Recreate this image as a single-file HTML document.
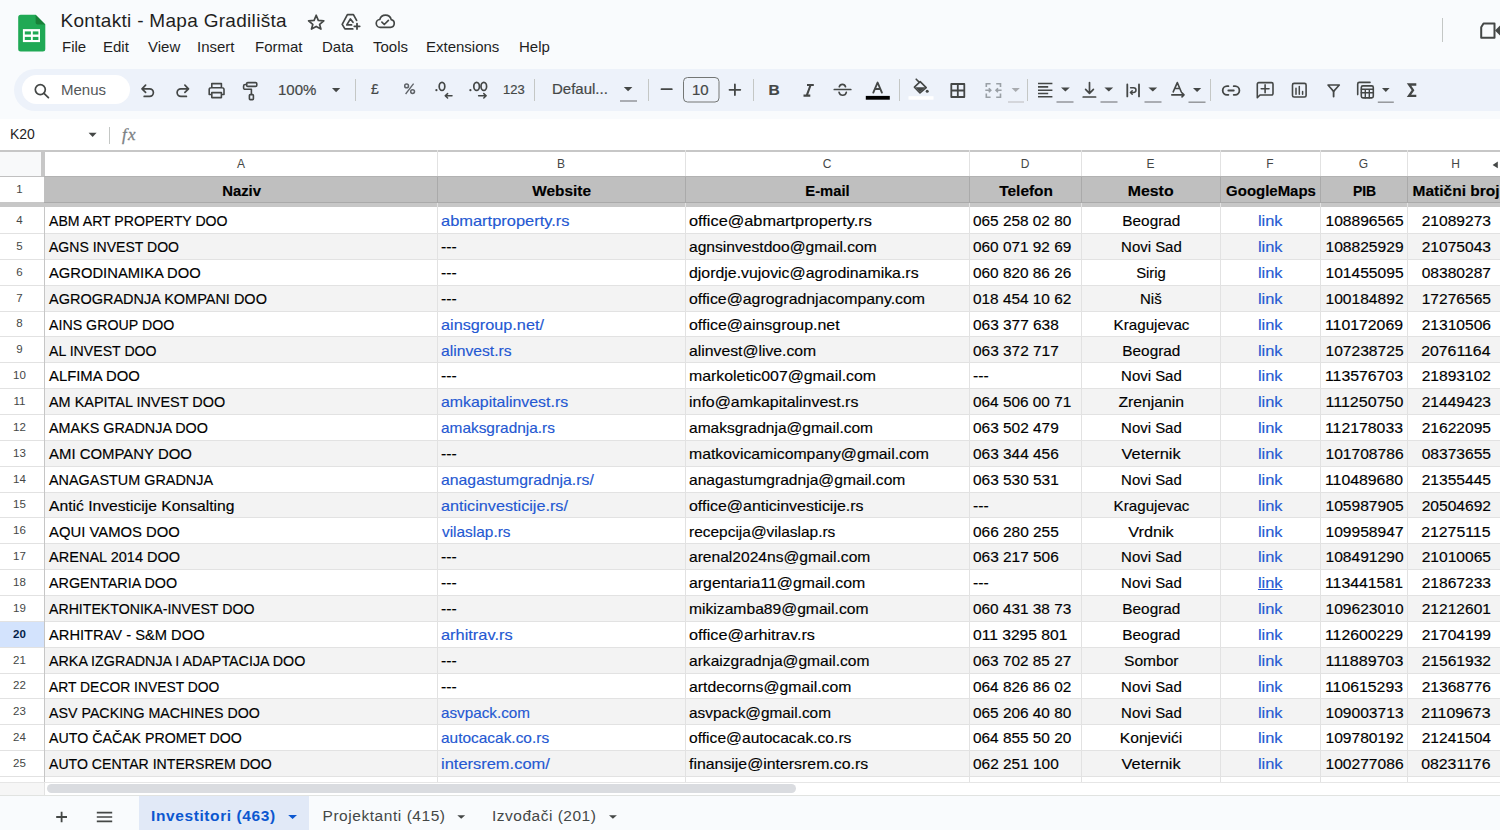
<!DOCTYPE html>
<html><head><meta charset="utf-8">
<style>
html,body{margin:0;padding:0}
body{width:1500px;height:830px;overflow:hidden;position:relative;background:#f9fbfd;font-family:"Liberation Sans",sans-serif;color:#1f1f1f}
.a{position:absolute;white-space:pre}
#title{left:60.5px;top:9.5px;font-size:19px;letter-spacing:0.3px;color:#1f1f1f}
.mi{position:absolute;top:38px;font-size:15px;color:#1f1f1f;white-space:pre}
#tb{position:absolute;left:14px;top:69px;width:1520px;height:42px;border-radius:21px;background:#edf2fa}
#search{position:absolute;left:22px;top:75px;width:108px;height:29px;border-radius:15px;background:#fff}
.tt{position:absolute;font-size:15px;color:#444746;white-space:pre;-webkit-text-stroke:0.2px #444746}
#fbar{position:absolute;left:0;top:119px;width:1500px;height:31px;background:#fff}
#grid{position:absolute;left:0;top:150px;width:1500px;height:645px;background:#fff;overflow:hidden}
.g{position:absolute}
.rbg{position:absolute;left:45px;width:1460px;background:#f3f3f3}
.hl{position:absolute;left:0;width:1500px;height:1px;background:#e2e2e2}
.vl{position:absolute;top:0;width:1px;height:632px;background:#e2e2e2}
.rn{position:absolute;left:0;width:39px;text-align:center;font-size:11.5px;color:#444746;line-height:14px}
.rn.sel{font-weight:bold;color:#041e49}
.rhsel{position:absolute;left:0;width:44px;background:#d3e3fd}
.t{position:absolute;white-space:pre;font-size:15px;line-height:17px;color:#000;transform-origin:0 0;-webkit-text-stroke:0.15px currentColor}
.lk{color:#2458d2}
.ul{text-decoration:underline}
.hb{font-weight:bold}
.cl{position:absolute;top:7px;font-size:12px;color:#444746;text-align:center;line-height:14px}
#tabs{position:absolute;left:0;top:795px;width:1500px;height:35px;background:#f9fbfd}
</style></head><body>
<!-- header -->
<svg class="a" style="left:0;top:0" width="1500" height="120" viewBox="0 0 1500 120">
  <!-- logo -->
  <path d="M20.7 14.7H35.6L45.3 24.4V49a2.5 2.5 0 0 1-2.5 2.5H20.7A2.5 2.5 0 0 1 18.2 49V17.2A2.5 2.5 0 0 1 20.7 14.7Z" fill="#20a955"/>
  <path d="M35.6 14.7L45.3 24.4H37.6A2 2 0 0 1 35.6 22.4Z" fill="#188038"/>
  <rect x="22.9" y="29.1" width="17.1" height="13" fill="#fff"/>
  <rect x="24.8" y="31.4" width="6.1" height="3.1" fill="#20a955"/>
  <rect x="32.8" y="31.4" width="5.6" height="3.1" fill="#20a955"/>
  <rect x="24.8" y="36.9" width="6.1" height="3.1" fill="#20a955"/>
  <rect x="32.8" y="36.9" width="5.6" height="3.1" fill="#20a955"/>
  <g fill="none" stroke="#444746" stroke-width="1.7" stroke-linejoin="round" stroke-linecap="round">
    <!-- star -->
    <path d="M316.2 15.2L318.3 20.4L323.8 20.8L319.6 24.4L320.9 29.1L316.2 26.4L311.5 29.1L312.8 24.4L308.6 20.8L314.1 20.4Z"/>
    <!-- drive add -->
    <path d="M356.6 20.4L353.4 14.6H347.4L342.2 24.4L344.9 28.9H352.8"/>
    <path d="M353 22.3L350.4 18.9L346.8 24.9H351.6"/>
    <path d="M357 23.6V29M354.3 26.3H359.7" stroke-width="1.8"/>
    <!-- cloud check -->
    <path d="M380.5 27.3H390.5A3.9 3.9 0 0 0 391.2 19.6A5.9 5.9 0 0 0 379.8 19.5A3.9 3.9 0 0 0 380.5 27.3Z"/>
    <path d="M381.9 22.2L384.3 24.5L388.4 20.4"/>
    <!-- meet -->
    <path d="M1483.5 23.4H1494.5V37.8H1481.2V27.2Z" stroke-width="2"/>
  </g>
  <path d="M1500 25.5L1495 30.5L1500 35.5Z" fill="#444746"/>
  <rect x="1442" y="18" width="1" height="24" fill="#c4c7c5"/>
</svg>
<div class="a" id="title">Kontakti - Mapa Gradilišta</div>
<div class="mi" style="left:62px">File</div>
<div class="mi" style="left:103px">Edit</div>
<div class="mi" style="left:148px">View</div>
<div class="mi" style="left:197px">Insert</div>
<div class="mi" style="left:255px">Format</div>
<div class="mi" style="left:322px">Data</div>
<div class="mi" style="left:373px">Tools</div>
<div class="mi" style="left:426px">Extensions</div>
<div class="mi" style="left:519px">Help</div>

<!-- toolbar -->
<div id="tb"></div>
<div id="search"></div>
<div class="tt" style="left:61px;top:81px;color:#545759;-webkit-text-stroke:0">Menus</div>
<div class="tt" style="left:278px;top:81px">100%</div>
<div class="tt" style="left:371px;top:81px;font-size:14px">£</div>
<div class="tt" style="left:503px;top:82px;font-size:13px">123</div>
<div class="tt" style="left:552px;top:80px">Defaul...</div>
<div class="tt" style="left:692px;top:81px;font-size:15px">10</div>
<svg class="a" style="left:0;top:60px" width="1500" height="60" viewBox="0 60 1500 60">
  <g fill="none" stroke="#444746" stroke-width="1.7" stroke-linecap="round" stroke-linejoin="round">
    <!-- search -->
    <circle cx="40.3" cy="89.6" r="5" stroke-width="1.7"/>
    <path d="M44 93.4L48.4 97.6" stroke-width="1.8"/>
    <!-- undo -->
    <path d="M142.5 88.8H149.6A3.8 3.8 0 0 1 149.6 96.4H144.2M145.6 85.2L142 88.8L145.6 92.4"/>
    <!-- redo -->
    <path d="M188 88.8H180.9A3.8 3.8 0 0 0 180.9 96.4H186.4M184.9 85.2L188.5 88.8L184.9 92.4"/>
    <!-- print -->
    <path d="M211.8 87.5V83.6H221.4V87.5M211.8 94.5H209.2V89.5A1.8 1.8 0 0 1 211 87.7H222.2A1.8 1.8 0 0 1 224 89.5V94.5H221.4M211.8 92.6H221.4V97.6H211.8Z" stroke-width="1.6"/>
    <!-- paint roller -->
    <rect x="246.6" y="82.6" width="10.2" height="3.8" rx="1.2" stroke-width="1.6"/>
    <path d="M246.6 84.5H245.2A1.6 1.6 0 0 0 243.6 86.1V87.9A1.4 1.4 0 0 0 245 89.3H251.4V94.3" stroke-width="1.6"/>
    <rect x="249.4" y="94.6" width="4" height="5" rx="0.8" stroke-width="1.6"/>
    <!-- decimals arrows -->
    <path d="M452 95.8H445.2M447.6 93.6L445.2 95.8L447.6 98" stroke-width="1.5"/>
    <path d="M478.6 95.8H486.2M483.8 93.6L486.2 95.8L483.8 98" stroke-width="1.5"/>
    <!-- minus plus -->
    <path d="M661.5 89.2H671.8M729.5 89.8H740.3M734.9 84.5V95.1" stroke-width="1.8"/>
    <!-- italic -->
    <path d="M803.5 95.6H810.3M807 85H813.8M810.6 85L806.7 95.6" stroke-width="2.1" stroke-linecap="butt"/>
    <!-- strikethrough -->
    <path d="M834.3 89.5H850.8M839.3 86.7A3.2 3.2 0 0 1 845.5 86.7M839.1 92.4A3.7 3.7 0 0 0 846.3 92.4" stroke-width="1.7"/>
    <!-- text color A -->
    <path d="M873.3 92.6L877.6 82.5L881.9 92.6M874.9 89H880.3" stroke-width="1.9"/>
    <!-- fill bucket -->
    <path d="M916.2 79.2L919.4 82.4M920.2 81.6L926.2 87.6L920 93L914.4 87.2Z" stroke-width="1.6"/>
    <!-- borders -->
    <path d="M951.3 84H964.3V97H951.3ZM957.8 84V97M951.3 90.5H964.3" stroke-width="1.8" stroke-linecap="butt"/>
    <!-- align left -->
    <path d="M1038 83.5H1052.4M1038 86.9H1048.2M1038 90.2H1052.4M1038 93.5H1048.2M1038 96.8H1052.4" stroke-width="1.6" stroke-linecap="butt"/>
    <!-- valign -->
    <path d="M1089.5 82.6V93M1085.6 89.4L1089.5 93.3L1093.4 89.4M1083.2 97H1095.6" stroke-width="1.7"/>
    <!-- wrap -->
    <path d="M1127.3 84.4V96.4M1139 84.4V96.4" stroke-width="1.8"/>
    <path d="M1130.6 87.7H1133.6A2.4 2.4 0 0 1 1133.6 92.5H1130.4M1132.2 90.7L1130.4 92.5L1132.2 94.3" stroke-width="1.5"/>
    <!-- rotate -->
    <path d="M1173.2 91.8L1177.3 82.6L1181.2 91.8M1174.6 88.5H1179.8M1171.8 94.9H1184M1182 92.9L1184 94.9L1182 96.9" stroke-width="1.6"/>
    <!-- link -->
    <path d="M1228.4 86.2H1227A4.3 4.3 0 0 0 1227 94.8H1228.4M1233.7 86.2H1235.1A4.3 4.3 0 0 1 1235.1 94.8H1233.7M1228.3 90.5H1233.8" stroke-width="1.8"/>
    <!-- comment -->
    <path d="M1257.3 97.7V84A1.4 1.4 0 0 1 1258.7 82.6H1271.6A1.4 1.4 0 0 1 1273 84V93.6A1.4 1.4 0 0 1 1271.6 95H1260Z" stroke-width="1.6"/>
    <path d="M1261.2 88.8H1269M1265.1 84.9V92.7" stroke-width="1.6"/>
    <!-- chart -->
    <rect x="1292.5" y="83.4" width="13.6" height="13.6" rx="1.6" stroke-width="1.6"/>
    <path d="M1296 88.2V94.2M1299.3 86.4V94.2M1302.6 91.5V94.2" stroke-width="1.5"/>
    <!-- filter -->
    <path d="M1328 85H1339.3L1333.6 91.4Z" stroke-width="1.6"/>
    <path d="M1333.6 91V96.6" stroke-width="1.8"/>
    <!-- calc -->
    <path d="M1357.7 94.6V84A1.6 1.6 0 0 1 1359.3 82.4H1370" stroke-width="1.6"/>
    <rect x="1361.3" y="85.9" width="12" height="12" rx="1.6" stroke-width="1.6"/>
    <path d="M1361.3 89.2H1373.3M1361.3 92.7H1373.3M1365.3 89.2V97.9M1369.3 89.2V97.9" stroke-width="1.4"/>
    <!-- sigma -->
    <path d="M1416.3 84.5H1409L1413 90.2L1409 95.9H1416.3" stroke-width="2.3" stroke-linecap="butt" stroke-linejoin="miter"/>
  </g>
  <!-- merge disabled -->
  <g fill="none" stroke="#9aa0a6" stroke-width="1.6">
    <path d="M990.6 83.7H986.3V87M986.3 93.4V97.2H990.6M996.2 83.7H1000.5V87M1000.5 93.4V97.2H996.2M985.3 90.2H990.8M988.8 88.2L990.8 90.2L988.8 92.2M1001.6 90.2H996M998 88.2L996 90.2L998 92.2"/>
  </g>
  <!-- fill bucket interior and drop -->
  <path d="M915.4 87.3H925.5L920 92.2Z" fill="#444746"/>
  <circle cx="927.2" cy="91.2" r="1.5" fill="#444746"/>
  <rect x="865.8" y="95.9" width="24" height="3.8" fill="#000"/>
  <rect x="908.5" y="96.2" width="25" height="3.5" fill="#fff"/>
  <!-- percent -->
  <g fill="none" stroke="#5f6368" stroke-width="1.5">
    <circle cx="406.6" cy="85.9" r="1.9"/>
    <circle cx="412.6" cy="91.6" r="1.9"/>
    <path d="M413.6 83.6L405.6 94" stroke-width="1.3"/>
  </g>
  <!-- decimals text -->
  <g fill="#444746">
    <circle cx="436.4" cy="90.2" r="1.1"/>
    <ellipse cx="442" cy="86.4" rx="2.8" ry="4" fill="none" stroke="#444746" stroke-width="1.7"/>
    <circle cx="470.4" cy="90.2" r="1.1"/>
    <ellipse cx="476.6" cy="86.4" rx="2.8" ry="4" fill="none" stroke="#444746" stroke-width="1.7"/>
    <ellipse cx="483.8" cy="86.4" rx="2.8" ry="4" fill="none" stroke="#444746" stroke-width="1.7"/>
  </g>
  <!-- separators -->
  <g fill="#c4c7c5">
    <rect x="355" y="79" width="1" height="22"/>
    <rect x="534" y="79" width="1" height="22"/>
    <rect x="648" y="79" width="1" height="22"/>
    <rect x="753" y="79" width="1" height="22"/>
    <rect x="899" y="79" width="1" height="22"/>
    <rect x="1027" y="79" width="1" height="22"/>
    <rect x="1210" y="79" width="1" height="22"/>
  </g>
  <!-- dropdown triangles -->
  <g fill="#444746">
    <path d="M332 88H340.2L336.1 92.2Z"/>
    <path d="M623.8 87H632.4L628.1 91.3Z"/>
    <path d="M1061 87.6H1069.8L1065.4 91.6Z"/>
    <path d="M1104.4 87.6H1113.2L1108.8 91.6Z"/>
    <path d="M1148.4 87.6H1157.2L1152.8 91.6Z"/>
    <path d="M1193 88H1201.2L1197.1 92Z"/>
    <path d="M1382 88H1389.6L1385.8 92Z"/>
  </g>
  <path d="M1011.6 88H1019.8L1015.7 92Z" fill="#a8abaf"/>
  <!-- underlines -->
  <g fill="#8e9194">
    <rect x="620" y="100.3" width="17" height="1.4"/>
    <rect x="1056.5" y="101.3" width="17" height="1.4"/>
    <rect x="1100.5" y="101.3" width="17" height="1.4"/>
    <rect x="1144.5" y="101.3" width="17" height="1.4"/>
    <rect x="1188.5" y="101.5" width="17" height="1.4"/>
    <rect x="1377.8" y="101.5" width="16" height="1.4"/>
  </g>
  <rect x="1008" y="101.3" width="16" height="1.4" fill="#c9cbce"/>
  <!-- font size box -->
  <rect x="683.5" y="77.5" width="35.5" height="24.5" rx="4" fill="none" stroke="#747775" stroke-width="1"/>
</svg>

<div class="tt" style="left:768.5px;top:81px;font-size:15.5px;font-weight:bold">B</div>
<div class="tt" style="left:1406.5px;top:80px;font-size:17px;font-weight:bold;display:none">Σ</div>

<!-- formula bar -->
<div id="fbar"></div>
<div class="a" style="left:10px;top:126px;font-size:14px;color:#1f1f1f">K20</div>
<svg class="a" style="left:0;top:119px" width="160" height="31" viewBox="0 119 160 31">
  <path d="M88.6 132.8H96.6L92.6 137Z" fill="#444746"/>
  <rect x="109" y="127" width="1" height="17" fill="#c4c7c5"/>
</svg>
<div class="a" style="left:122px;top:124.5px;font-family:'Liberation Serif',serif;font-style:italic;font-size:17px;letter-spacing:1.2px;color:#7b7f83;-webkit-text-stroke:0.3px #7b7f83">fx</div>

<!-- grid -->
<div id="grid">
  <div class="g" style="left:0;top:0;width:1500px;height:2px;background:#c7c7c7"></div>
  <div class="g" style="left:0;top:2px;width:41px;height:24px;background:#f8f9fa"></div>
  <div class="g" style="left:41px;top:2px;width:4px;height:24px;background:#c7c7c7"></div>
  <div class="g" style="left:0;top:26px;width:1500px;height:1px;background:#c0c0c0"></div>
  <div class="g" style="left:44px;top:27px;width:1460px;height:25px;background:#bfbfbf"></div>
  <div class="g" style="left:0;top:52px;width:1500px;height:5px;background:#c7c7c7"></div>
  <div class="g" style="left:44px;top:27px;width:1px;height:25px;background:#c0c0c0"></div>
  <div class="g" style="left:44px;top:57px;width:1px;height:575px;background:#cdcdcd"></div>
  <div class="rn" style="top:31.7px">1</div>
  <div class="cl" style="left:45px;width:392px">A</div>
  <div class="cl" style="left:437px;width:248px">B</div>
  <div class="cl" style="left:685px;width:284px">C</div>
  <div class="cl" style="left:969px;width:112px">D</div>
  <div class="cl" style="left:1081px;width:139px">E</div>
  <div class="cl" style="left:1220px;width:100px">F</div>
  <div class="cl" style="left:1320px;width:87px">G</div>
  <div class="cl" style="left:1407px;width:97px">H</div>
  <svg class="g" style="left:1490px;top:10px" width="10" height="10" viewBox="0 0 10 10"><path d="M7.8 1.6V8.2L2.6 4.9Z" fill="#444746"/></svg>
</div>
<div id="cells" style="position:absolute;left:0;top:0;width:1500px;height:782px;overflow:hidden">
<div class="hl" style="top:233px"></div>
<div class="rbg" style="top:234px;height:25px"></div>
<div class="hl" style="top:259px"></div>
<div class="hl" style="top:285px"></div>
<div class="rbg" style="top:286px;height:25px"></div>
<div class="hl" style="top:311px"></div>
<div class="hl" style="top:336px"></div>
<div class="rbg" style="top:337px;height:25px"></div>
<div class="hl" style="top:362px"></div>
<div class="hl" style="top:388px"></div>
<div class="rbg" style="top:389px;height:25px"></div>
<div class="hl" style="top:414px"></div>
<div class="hl" style="top:440px"></div>
<div class="rbg" style="top:441px;height:25px"></div>
<div class="hl" style="top:466px"></div>
<div class="hl" style="top:492px"></div>
<div class="rbg" style="top:493px;height:24px"></div>
<div class="hl" style="top:517px"></div>
<div class="hl" style="top:543px"></div>
<div class="rbg" style="top:544px;height:25px"></div>
<div class="hl" style="top:569px"></div>
<div class="hl" style="top:595px"></div>
<div class="rbg" style="top:596px;height:25px"></div>
<div class="hl" style="top:621px"></div>
<div class="hl" style="top:647px"></div>
<div class="rbg" style="top:648px;height:25px"></div>
<div class="hl" style="top:673px"></div>
<div class="hl" style="top:698px"></div>
<div class="rbg" style="top:699px;height:25px"></div>
<div class="hl" style="top:724px"></div>
<div class="hl" style="top:750px"></div>
<div class="rbg" style="top:751px;height:25px"></div>
<div class="hl" style="top:776px"></div>
<div class="g" style="position:absolute;left:44px;top:207px;width:1px;height:575px;background:#c6c6c6"></div>
<div class="vl" style="left:437px;top:150px"></div>
<div class="vl" style="left:685px;top:150px"></div>
<div class="vl" style="left:969px;top:150px"></div>
<div class="vl" style="left:1081px;top:150px"></div>
<div class="vl" style="left:1220px;top:150px"></div>
<div class="vl" style="left:1320px;top:150px"></div>
<div class="vl" style="left:1407px;top:150px"></div>
<div class="rn" style="top:213.2px">4</div>
<div class="rn" style="top:239.2px">5</div>
<div class="rn" style="top:265.2px">6</div>
<div class="rn" style="top:291.2px">7</div>
<div class="rn" style="top:316.2px">8</div>
<div class="rn" style="top:342.2px">9</div>
<div class="rn" style="top:368.2px">10</div>
<div class="rn" style="top:394.2px">11</div>
<div class="rn" style="top:420.2px">12</div>
<div class="rn" style="top:446.2px">13</div>
<div class="rn" style="top:472.2px">14</div>
<div class="rn" style="top:497.2px">15</div>
<div class="rn" style="top:523.2px">16</div>
<div class="rn" style="top:549.2px">17</div>
<div class="rn" style="top:575.2px">18</div>
<div class="rn" style="top:601.2px">19</div>
<div class="rhsel" style="top:622px;height:25px"></div>
<div class="rn sel" style="top:627.2px">20</div>
<div class="rn" style="top:653.2px">21</div>
<div class="rn" style="top:678.2px">22</div>
<div class="rn" style="top:704.2px">23</div>
<div class="rn" style="top:730.2px">24</div>
<div class="rn" style="top:756.2px">25</div>
<div class="t" style="left:48.6px;top:212.3px;transform:scaleX(0.941)">ABM ART PROPERTY DOO</div>
<div class="t lk" style="left:440.9px;top:212.3px;transform:scaleX(1.096)">abmartproperty.rs</div>
<div class="t" style="left:688.9px;top:212.3px;transform:scaleX(1.088)">office@abmartproperty.rs</div>
<div class="t" style="left:973.0px;top:212.3px;transform:scaleX(1.024)">065 258 02 80</div>
<div class="t" style="left:1122.7px;top:212.3px;transform:scaleX(1.023);transform-origin:50% 0">Beograd</div>
<div class="t lk" style="left:1259.3px;top:212.3px;transform:scaleX(1.093);transform-origin:50% 0">link</div>
<div class="t" style="left:1326.6px;top:212.3px;transform:scaleX(1.039);transform-origin:50% 0">108896565</div>
<div class="t" style="left:1422.7px;top:212.3px;transform:scaleX(1.039);transform-origin:50% 0">21089273</div>
<div class="t" style="left:48.6px;top:238.2px;transform:scaleX(0.936)">AGNS INVEST DOO</div>
<div class="t" style="left:440.9px;top:238.2px;transform:scaleX(1.047)">---</div>
<div class="t" style="left:688.9px;top:238.2px;transform:scaleX(1.041)">agnsinvestdoo@gmail.com</div>
<div class="t" style="left:973.0px;top:238.2px;transform:scaleX(1.024)">060 071 92 69</div>
<div class="t" style="left:1120.7px;top:238.2px;transform:scaleX(0.996);transform-origin:50% 0">Novi Sad</div>
<div class="t lk" style="left:1259.3px;top:238.2px;transform:scaleX(1.093);transform-origin:50% 0">link</div>
<div class="t" style="left:1326.6px;top:238.2px;transform:scaleX(1.039);transform-origin:50% 0">108825929</div>
<div class="t" style="left:1422.7px;top:238.2px;transform:scaleX(1.039);transform-origin:50% 0">21075043</div>
<div class="t" style="left:48.6px;top:264.0px;transform:scaleX(0.984)">AGRODINAMIKA DOO</div>
<div class="t" style="left:440.9px;top:264.0px;transform:scaleX(1.047)">---</div>
<div class="t" style="left:688.9px;top:264.0px;transform:scaleX(1.058)">djordje.vujovic@agrodinamika.rs</div>
<div class="t" style="left:973.0px;top:264.0px;transform:scaleX(1.024)">060 820 86 26</div>
<div class="t" style="left:1136.1px;top:264.0px;transform:scaleX(0.990);transform-origin:50% 0">Sirig</div>
<div class="t lk" style="left:1259.3px;top:264.0px;transform:scaleX(1.093);transform-origin:50% 0">link</div>
<div class="t" style="left:1326.6px;top:264.0px;transform:scaleX(1.039);transform-origin:50% 0">101455095</div>
<div class="t" style="left:1422.7px;top:264.0px;transform:scaleX(1.039);transform-origin:50% 0">08380287</div>
<div class="t" style="left:48.6px;top:289.9px;transform:scaleX(0.966)">AGROGRADNJA KOMPANI DOO</div>
<div class="t" style="left:440.9px;top:289.9px;transform:scaleX(1.047)">---</div>
<div class="t" style="left:688.9px;top:289.9px;transform:scaleX(1.058)">office@agrogradnjacompany.com</div>
<div class="t" style="left:973.0px;top:289.9px;transform:scaleX(1.024)">018 454 10 62</div>
<div class="t" style="left:1140.3px;top:289.9px;transform:scaleX(0.999);transform-origin:50% 0">Niš</div>
<div class="t lk" style="left:1259.3px;top:289.9px;transform:scaleX(1.093);transform-origin:50% 0">link</div>
<div class="t" style="left:1326.6px;top:289.9px;transform:scaleX(1.039);transform-origin:50% 0">100184892</div>
<div class="t" style="left:1422.7px;top:289.9px;transform:scaleX(1.039);transform-origin:50% 0">17276565</div>
<div class="t" style="left:48.6px;top:315.7px;transform:scaleX(0.947)">AINS GROUP DOO</div>
<div class="t lk" style="left:440.9px;top:315.7px;transform:scaleX(1.083)">ainsgroup.net/</div>
<div class="t" style="left:688.9px;top:315.7px;transform:scaleX(1.063)">office@ainsgroup.net</div>
<div class="t" style="left:973.0px;top:315.7px;transform:scaleX(1.028)">063 377 638</div>
<div class="t" style="left:1113.6px;top:315.7px;transform:scaleX(1.010);transform-origin:50% 0">Kragujevac</div>
<div class="t lk" style="left:1259.3px;top:315.7px;transform:scaleX(1.093);transform-origin:50% 0">link</div>
<div class="t" style="left:1327.1px;top:315.7px;transform:scaleX(1.055);transform-origin:50% 0">110172069</div>
<div class="t" style="left:1422.7px;top:315.7px;transform:scaleX(1.039);transform-origin:50% 0">21310506</div>
<div class="t" style="left:48.6px;top:341.6px;transform:scaleX(0.942)">AL INVEST DOO</div>
<div class="t lk" style="left:440.9px;top:341.6px;transform:scaleX(1.046)">alinvest.rs</div>
<div class="t" style="left:688.9px;top:341.6px;transform:scaleX(1.050)">alinvest@live.com</div>
<div class="t" style="left:973.0px;top:341.6px;transform:scaleX(1.028)">063 372 717</div>
<div class="t" style="left:1122.7px;top:341.6px;transform:scaleX(1.023);transform-origin:50% 0">Beograd</div>
<div class="t lk" style="left:1259.3px;top:341.6px;transform:scaleX(1.093);transform-origin:50% 0">link</div>
<div class="t" style="left:1326.6px;top:341.6px;transform:scaleX(1.039);transform-origin:50% 0">107238725</div>
<div class="t" style="left:1423.3px;top:341.6px;transform:scaleX(1.057);transform-origin:50% 0">20761164</div>
<div class="t" style="left:48.6px;top:367.4px;transform:scaleX(0.990)">ALFIMA DOO</div>
<div class="t" style="left:440.9px;top:367.4px;transform:scaleX(1.047)">---</div>
<div class="t" style="left:688.5px;top:367.4px;transform:scaleX(1.057)">markoletic007@gmail.com</div>
<div class="t" style="left:972.9px;top:367.4px;transform:scaleX(1.047)">---</div>
<div class="t" style="left:1120.7px;top:367.4px;transform:scaleX(0.996);transform-origin:50% 0">Novi Sad</div>
<div class="t lk" style="left:1259.3px;top:367.4px;transform:scaleX(1.093);transform-origin:50% 0">link</div>
<div class="t" style="left:1327.1px;top:367.4px;transform:scaleX(1.055);transform-origin:50% 0">113576703</div>
<div class="t" style="left:1422.7px;top:367.4px;transform:scaleX(1.039);transform-origin:50% 0">21893102</div>
<div class="t" style="left:48.6px;top:393.3px;transform:scaleX(0.962)">AM KAPITAL INVEST DOO</div>
<div class="t lk" style="left:440.9px;top:393.3px;transform:scaleX(1.059)">amkapitalinvest.rs</div>
<div class="t" style="left:688.5px;top:393.3px;transform:scaleX(1.062)">info@amkapitalinvest.rs</div>
<div class="t" style="left:973.0px;top:393.3px;transform:scaleX(1.024)">064 506 00 71</div>
<div class="t" style="left:1119.8px;top:393.3px;transform:scaleX(1.049);transform-origin:50% 0">Zrenjanin</div>
<div class="t lk" style="left:1259.3px;top:393.3px;transform:scaleX(1.093);transform-origin:50% 0">link</div>
<div class="t" style="left:1327.7px;top:393.3px;transform:scaleX(1.071);transform-origin:50% 0">111250750</div>
<div class="t" style="left:1422.7px;top:393.3px;transform:scaleX(1.039);transform-origin:50% 0">21449423</div>
<div class="t" style="left:48.6px;top:419.2px;transform:scaleX(0.958)">AMAKS GRADNJA DOO</div>
<div class="t lk" style="left:440.9px;top:419.2px;transform:scaleX(1.027)">amaksgradnja.rs</div>
<div class="t" style="left:688.9px;top:419.2px;transform:scaleX(1.035)">amaksgradnja@gmail.com</div>
<div class="t" style="left:973.0px;top:419.2px;transform:scaleX(1.028)">063 502 479</div>
<div class="t" style="left:1120.7px;top:419.2px;transform:scaleX(0.996);transform-origin:50% 0">Novi Sad</div>
<div class="t lk" style="left:1259.3px;top:419.2px;transform:scaleX(1.093);transform-origin:50% 0">link</div>
<div class="t" style="left:1327.1px;top:419.2px;transform:scaleX(1.055);transform-origin:50% 0">112178033</div>
<div class="t" style="left:1422.7px;top:419.2px;transform:scaleX(1.039);transform-origin:50% 0">21622095</div>
<div class="t" style="left:48.6px;top:445.0px;transform:scaleX(0.995)">AMI COMPANY DOO</div>
<div class="t" style="left:440.9px;top:445.0px;transform:scaleX(1.047)">---</div>
<div class="t" style="left:688.6px;top:445.0px;transform:scaleX(1.053)">matkovicamicompany@gmail.com</div>
<div class="t" style="left:973.0px;top:445.0px;transform:scaleX(1.028)">063 344 456</div>
<div class="t" style="left:1124.0px;top:445.0px;transform:scaleX(1.090);transform-origin:50% 0">Veternik</div>
<div class="t lk" style="left:1259.3px;top:445.0px;transform:scaleX(1.093);transform-origin:50% 0">link</div>
<div class="t" style="left:1326.6px;top:445.0px;transform:scaleX(1.039);transform-origin:50% 0">101708786</div>
<div class="t" style="left:1422.7px;top:445.0px;transform:scaleX(1.039);transform-origin:50% 0">08373655</div>
<div class="t" style="left:48.6px;top:470.9px;transform:scaleX(0.960)">ANAGASTUM GRADNJA</div>
<div class="t lk" style="left:440.9px;top:470.9px;transform:scaleX(1.053)">anagastumgradnja.rs/</div>
<div class="t" style="left:688.9px;top:470.9px;transform:scaleX(1.041)">anagastumgradnja@gmail.com</div>
<div class="t" style="left:973.0px;top:470.9px;transform:scaleX(1.028)">063 530 531</div>
<div class="t" style="left:1120.7px;top:470.9px;transform:scaleX(0.996);transform-origin:50% 0">Novi Sad</div>
<div class="t lk" style="left:1259.3px;top:470.9px;transform:scaleX(1.093);transform-origin:50% 0">link</div>
<div class="t" style="left:1327.1px;top:470.9px;transform:scaleX(1.055);transform-origin:50% 0">110489680</div>
<div class="t" style="left:1422.7px;top:470.9px;transform:scaleX(1.039);transform-origin:50% 0">21355445</div>
<div class="t" style="left:48.6px;top:496.7px;transform:scaleX(1.044)">Antić Investicije Konsalting</div>
<div class="t lk" style="left:440.9px;top:496.7px;transform:scaleX(1.080)">anticinvesticije.rs/</div>
<div class="t" style="left:688.9px;top:496.7px;transform:scaleX(1.063)">office@anticinvesticije.rs</div>
<div class="t" style="left:972.9px;top:496.7px;transform:scaleX(1.047)">---</div>
<div class="t" style="left:1113.6px;top:496.7px;transform:scaleX(1.010);transform-origin:50% 0">Kragujevac</div>
<div class="t lk" style="left:1259.3px;top:496.7px;transform:scaleX(1.093);transform-origin:50% 0">link</div>
<div class="t" style="left:1326.6px;top:496.7px;transform:scaleX(1.039);transform-origin:50% 0">105987905</div>
<div class="t" style="left:1422.7px;top:496.7px;transform:scaleX(1.039);transform-origin:50% 0">20504692</div>
<div class="t" style="left:48.6px;top:522.6px;transform:scaleX(0.990)">AQUI VAMOS DOO</div>
<div class="t lk" style="left:441.5px;top:522.6px;transform:scaleX(1.027)">vilaslap.rs</div>
<div class="t" style="left:688.6px;top:522.6px;transform:scaleX(1.031)">recepcija@vilaslap.rs</div>
<div class="t" style="left:973.0px;top:522.6px;transform:scaleX(1.028)">066 280 255</div>
<div class="t" style="left:1130.1px;top:522.6px;transform:scaleX(1.080);transform-origin:50% 0">Vrdnik</div>
<div class="t lk" style="left:1259.3px;top:522.6px;transform:scaleX(1.093);transform-origin:50% 0">link</div>
<div class="t" style="left:1326.6px;top:522.6px;transform:scaleX(1.039);transform-origin:50% 0">109958947</div>
<div class="t" style="left:1423.3px;top:522.6px;transform:scaleX(1.057);transform-origin:50% 0">21275115</div>
<div class="t" style="left:48.6px;top:548.4px;transform:scaleX(0.969)">ARENAL 2014 DOO</div>
<div class="t" style="left:440.9px;top:548.4px;transform:scaleX(1.047)">---</div>
<div class="t" style="left:688.9px;top:548.4px;transform:scaleX(1.039)">arenal2024ns@gmail.com</div>
<div class="t" style="left:973.0px;top:548.4px;transform:scaleX(1.028)">063 217 506</div>
<div class="t" style="left:1120.7px;top:548.4px;transform:scaleX(0.996);transform-origin:50% 0">Novi Sad</div>
<div class="t lk" style="left:1259.3px;top:548.4px;transform:scaleX(1.093);transform-origin:50% 0">link</div>
<div class="t" style="left:1326.6px;top:548.4px;transform:scaleX(1.039);transform-origin:50% 0">108491290</div>
<div class="t" style="left:1422.7px;top:548.4px;transform:scaleX(1.039);transform-origin:50% 0">21010065</div>
<div class="t" style="left:48.6px;top:574.3px;transform:scaleX(0.957)">ARGENTARIA DOO</div>
<div class="t" style="left:440.9px;top:574.3px;transform:scaleX(1.047)">---</div>
<div class="t" style="left:688.9px;top:574.3px;transform:scaleX(1.057)">argentaria11@gmail.com</div>
<div class="t" style="left:972.9px;top:574.3px;transform:scaleX(1.047)">---</div>
<div class="t" style="left:1120.7px;top:574.3px;transform:scaleX(0.996);transform-origin:50% 0">Novi Sad</div>
<div class="t lk ul" style="left:1259.3px;top:574.3px;transform:scaleX(1.093);transform-origin:50% 0">link</div>
<div class="t" style="left:1327.1px;top:574.3px;transform:scaleX(1.055);transform-origin:50% 0">113441581</div>
<div class="t" style="left:1422.7px;top:574.3px;transform:scaleX(1.039);transform-origin:50% 0">21867233</div>
<div class="t" style="left:48.6px;top:600.2px;transform:scaleX(0.943)">ARHITEKTONIKA-INVEST DOO</div>
<div class="t" style="left:440.9px;top:600.2px;transform:scaleX(1.047)">---</div>
<div class="t" style="left:688.6px;top:600.2px;transform:scaleX(1.044)">mikizamba89@gmail.com</div>
<div class="t" style="left:973.0px;top:600.2px;transform:scaleX(1.024)">060 431 38 73</div>
<div class="t" style="left:1122.7px;top:600.2px;transform:scaleX(1.023);transform-origin:50% 0">Beograd</div>
<div class="t lk" style="left:1259.3px;top:600.2px;transform:scaleX(1.093);transform-origin:50% 0">link</div>
<div class="t" style="left:1326.6px;top:600.2px;transform:scaleX(1.039);transform-origin:50% 0">109623010</div>
<div class="t" style="left:1422.7px;top:600.2px;transform:scaleX(1.039);transform-origin:50% 0">21212601</div>
<div class="t" style="left:48.6px;top:626.0px;transform:scaleX(0.979)">ARHITRAV - S&amp;M DOO</div>
<div class="t lk" style="left:440.9px;top:626.0px;transform:scaleX(1.092)">arhitrav.rs</div>
<div class="t" style="left:688.9px;top:626.0px;transform:scaleX(1.082)">office@arhitrav.rs</div>
<div class="t" style="left:973.0px;top:626.0px;transform:scaleX(1.041)">011 3295 801</div>
<div class="t" style="left:1122.7px;top:626.0px;transform:scaleX(1.023);transform-origin:50% 0">Beograd</div>
<div class="t lk" style="left:1259.3px;top:626.0px;transform:scaleX(1.093);transform-origin:50% 0">link</div>
<div class="t" style="left:1327.1px;top:626.0px;transform:scaleX(1.055);transform-origin:50% 0">112600229</div>
<div class="t" style="left:1422.7px;top:626.0px;transform:scaleX(1.039);transform-origin:50% 0">21704199</div>
<div class="t" style="left:48.6px;top:651.9px;transform:scaleX(0.953)">ARKA IZGRADNJA I ADAPTACIJA DOO</div>
<div class="t" style="left:440.9px;top:651.9px;transform:scaleX(1.047)">---</div>
<div class="t" style="left:688.9px;top:651.9px;transform:scaleX(1.039)">arkaizgradnja@gmail.com</div>
<div class="t" style="left:973.0px;top:651.9px;transform:scaleX(1.024)">063 702 85 27</div>
<div class="t" style="left:1124.8px;top:651.9px;transform:scaleX(1.037);transform-origin:50% 0">Sombor</div>
<div class="t lk" style="left:1259.3px;top:651.9px;transform:scaleX(1.093);transform-origin:50% 0">link</div>
<div class="t" style="left:1327.7px;top:651.9px;transform:scaleX(1.071);transform-origin:50% 0">111889703</div>
<div class="t" style="left:1422.7px;top:651.9px;transform:scaleX(1.039);transform-origin:50% 0">21561932</div>
<div class="t" style="left:48.6px;top:677.7px;transform:scaleX(0.925)">ART DECOR INVEST DOO</div>
<div class="t" style="left:440.9px;top:677.7px;transform:scaleX(1.047)">---</div>
<div class="t" style="left:688.9px;top:677.7px;transform:scaleX(1.051)">artdecorns@gmail.com</div>
<div class="t" style="left:973.0px;top:677.7px;transform:scaleX(1.024)">064 826 86 02</div>
<div class="t" style="left:1120.7px;top:677.7px;transform:scaleX(0.996);transform-origin:50% 0">Novi Sad</div>
<div class="t lk" style="left:1259.3px;top:677.7px;transform:scaleX(1.093);transform-origin:50% 0">link</div>
<div class="t" style="left:1327.1px;top:677.7px;transform:scaleX(1.055);transform-origin:50% 0">110615293</div>
<div class="t" style="left:1422.7px;top:677.7px;transform:scaleX(1.039);transform-origin:50% 0">21368776</div>
<div class="t" style="left:48.6px;top:703.6px;transform:scaleX(0.949)">ASV PACKING MACHINES DOO</div>
<div class="t lk" style="left:441.0px;top:703.6px;transform:scaleX(1.017)">asvpack.com</div>
<div class="t" style="left:688.9px;top:703.6px;transform:scaleX(1.024)">asvpack@gmail.com</div>
<div class="t" style="left:973.0px;top:703.6px;transform:scaleX(1.024)">065 206 40 80</div>
<div class="t" style="left:1120.7px;top:703.6px;transform:scaleX(0.996);transform-origin:50% 0">Novi Sad</div>
<div class="t lk" style="left:1259.3px;top:703.6px;transform:scaleX(1.093);transform-origin:50% 0">link</div>
<div class="t" style="left:1326.6px;top:703.6px;transform:scaleX(1.039);transform-origin:50% 0">109003713</div>
<div class="t" style="left:1423.3px;top:703.6px;transform:scaleX(1.057);transform-origin:50% 0">21109673</div>
<div class="t" style="left:48.6px;top:729.4px;transform:scaleX(0.947)">AUTO ČAČAK PROMET DOO</div>
<div class="t lk" style="left:440.9px;top:729.4px;transform:scaleX(1.029)">autocacak.co.rs</div>
<div class="t" style="left:688.9px;top:729.4px;transform:scaleX(1.042)">office@autocacak.co.rs</div>
<div class="t" style="left:973.0px;top:729.4px;transform:scaleX(1.024)">064 855 50 20</div>
<div class="t" style="left:1121.1px;top:729.4px;transform:scaleX(1.038);transform-origin:50% 0">Konjevići</div>
<div class="t lk" style="left:1259.3px;top:729.4px;transform:scaleX(1.093);transform-origin:50% 0">link</div>
<div class="t" style="left:1326.6px;top:729.4px;transform:scaleX(1.039);transform-origin:50% 0">109780192</div>
<div class="t" style="left:1422.7px;top:729.4px;transform:scaleX(1.039);transform-origin:50% 0">21241504</div>
<div class="t" style="left:48.6px;top:755.3px;transform:scaleX(0.940)">AUTO CENTAR INTERSREM DOO</div>
<div class="t lk" style="left:440.5px;top:755.3px;transform:scaleX(1.097)">intersrem.com/</div>
<div class="t" style="left:689.4px;top:755.3px;transform:scaleX(1.057)">finansije@intersrem.co.rs</div>
<div class="t" style="left:973.0px;top:755.3px;transform:scaleX(1.028)">062 251 100</div>
<div class="t" style="left:1124.0px;top:755.3px;transform:scaleX(1.090);transform-origin:50% 0">Veternik</div>
<div class="t lk" style="left:1259.3px;top:755.3px;transform:scaleX(1.093);transform-origin:50% 0">link</div>
<div class="t" style="left:1326.6px;top:755.3px;transform:scaleX(1.039);transform-origin:50% 0">100277086</div>
<div class="t" style="left:1423.3px;top:755.3px;transform:scaleX(1.057);transform-origin:50% 0">08231176</div>
<div class="g" style="position:absolute;left:437px;top:176px;width:1px;height:27px;background:#aaaaaa"></div>
<div class="g" style="position:absolute;left:685px;top:176px;width:1px;height:27px;background:#aaaaaa"></div>
<div class="g" style="position:absolute;left:969px;top:176px;width:1px;height:27px;background:#aaaaaa"></div>
<div class="g" style="position:absolute;left:1081px;top:176px;width:1px;height:27px;background:#aaaaaa"></div>
<div class="g" style="position:absolute;left:1220px;top:176px;width:1px;height:27px;background:#aaaaaa"></div>
<div class="g" style="position:absolute;left:1320px;top:176px;width:1px;height:27px;background:#aaaaaa"></div>
<div class="g" style="position:absolute;left:1407px;top:176px;width:1px;height:27px;background:#aaaaaa"></div>
<div class="g" style="position:absolute;left:44px;top:202px;width:1460px;height:1px;background:#aaaaaa"></div>
<div class="g" style="position:absolute;left:44px;top:176px;width:1460px;height:1px;background:#b2b2b2"></div>
<div class="t hb" style="left:221.5px;top:181.5px;transform:scaleX(0.989);transform-origin:50% 0">Naziv</div>
<div class="t hb" style="left:533.0px;top:181.5px;transform:scaleX(1.025);transform-origin:50% 0">Website</div>
<div class="t hb" style="left:805.1px;top:181.5px;transform:scaleX(0.984);transform-origin:50% 0">E-mail</div>
<div class="t hb" style="left:999.5px;top:181.5px;transform:scaleX(1.028);transform-origin:50% 0">Telefon</div>
<div class="t hb" style="left:1129.4px;top:181.5px;transform:scaleX(1.057);transform-origin:50% 0">Mesto</div>
<div class="t hb" style="left:1225.6px;top:181.5px;transform:scaleX(0.998);transform-origin:50% 0">GoogleMaps</div>
<div class="t hb" style="left:1351.6px;top:181.5px;transform:scaleX(0.930);transform-origin:50% 0">PIB</div>
<div class="t hb" style="left:1414.0px;top:181.5px;transform:scaleX(1.034);transform-origin:50% 0">Matični broj</div>
</div>

<!-- scrollbar -->
<div class="a" style="left:0;top:782px;width:1500px;height:13px;background:#ffffff"></div>
<div class="a" style="left:0;top:783px;width:44px;height:12px;background:#f6f6f6"></div>
<div class="a" style="left:44px;top:782px;width:1px;height:13px;background:#e2e2e2"></div>
<div class="a" style="left:0;top:782px;width:1500px;height:1px;background:#e6e6e6"></div>
<div class="a" style="left:46.5px;top:784px;width:749px;height:9px;border-radius:5px;background:#dadce0"></div>

<!-- tabs -->
<div id="tabs">
  <div class="a" style="left:0;top:0;width:1500px;height:1px;background:#e1e3e1"></div>
  <div class="a" style="left:138.6px;top:1px;width:170.5px;height:34px;background:#e1e9f7"></div>
</div>
<svg class="a" style="left:0;top:795px" width="700" height="35" viewBox="0 795 700 35">
  <path d="M56.2 817H67M61.6 811.8V822.3" stroke="#444746" stroke-width="1.8" fill="none"/>
  <path d="M96.8 812.6H112.2M96.8 817H112.2M96.8 821.3H112.2" stroke="#444746" stroke-width="1.7" fill="none"/>
  <path d="M288.2 815H297L292.6 819Z" fill="#0b57d0"/>
  <path d="M457.3 815.2H465.2L461.2 818.8Z" fill="#444746"/>
  <path d="M609 815.2H616.9L612.9 818.8Z" fill="#444746"/>
</svg>
<div class="a" style="left:151px;top:807px;font-size:15.5px;font-weight:bold;color:#0b57d0;letter-spacing:0.6px">Investitori (463)</div>
<div class="a" style="left:322.5px;top:807px;font-size:15.5px;color:#444746;letter-spacing:0.55px">Projektanti (415)</div>
<div class="a" style="left:492px;top:807px;font-size:15.5px;color:#444746;letter-spacing:0.5px">Izvođači (201)</div>
</body></html>
